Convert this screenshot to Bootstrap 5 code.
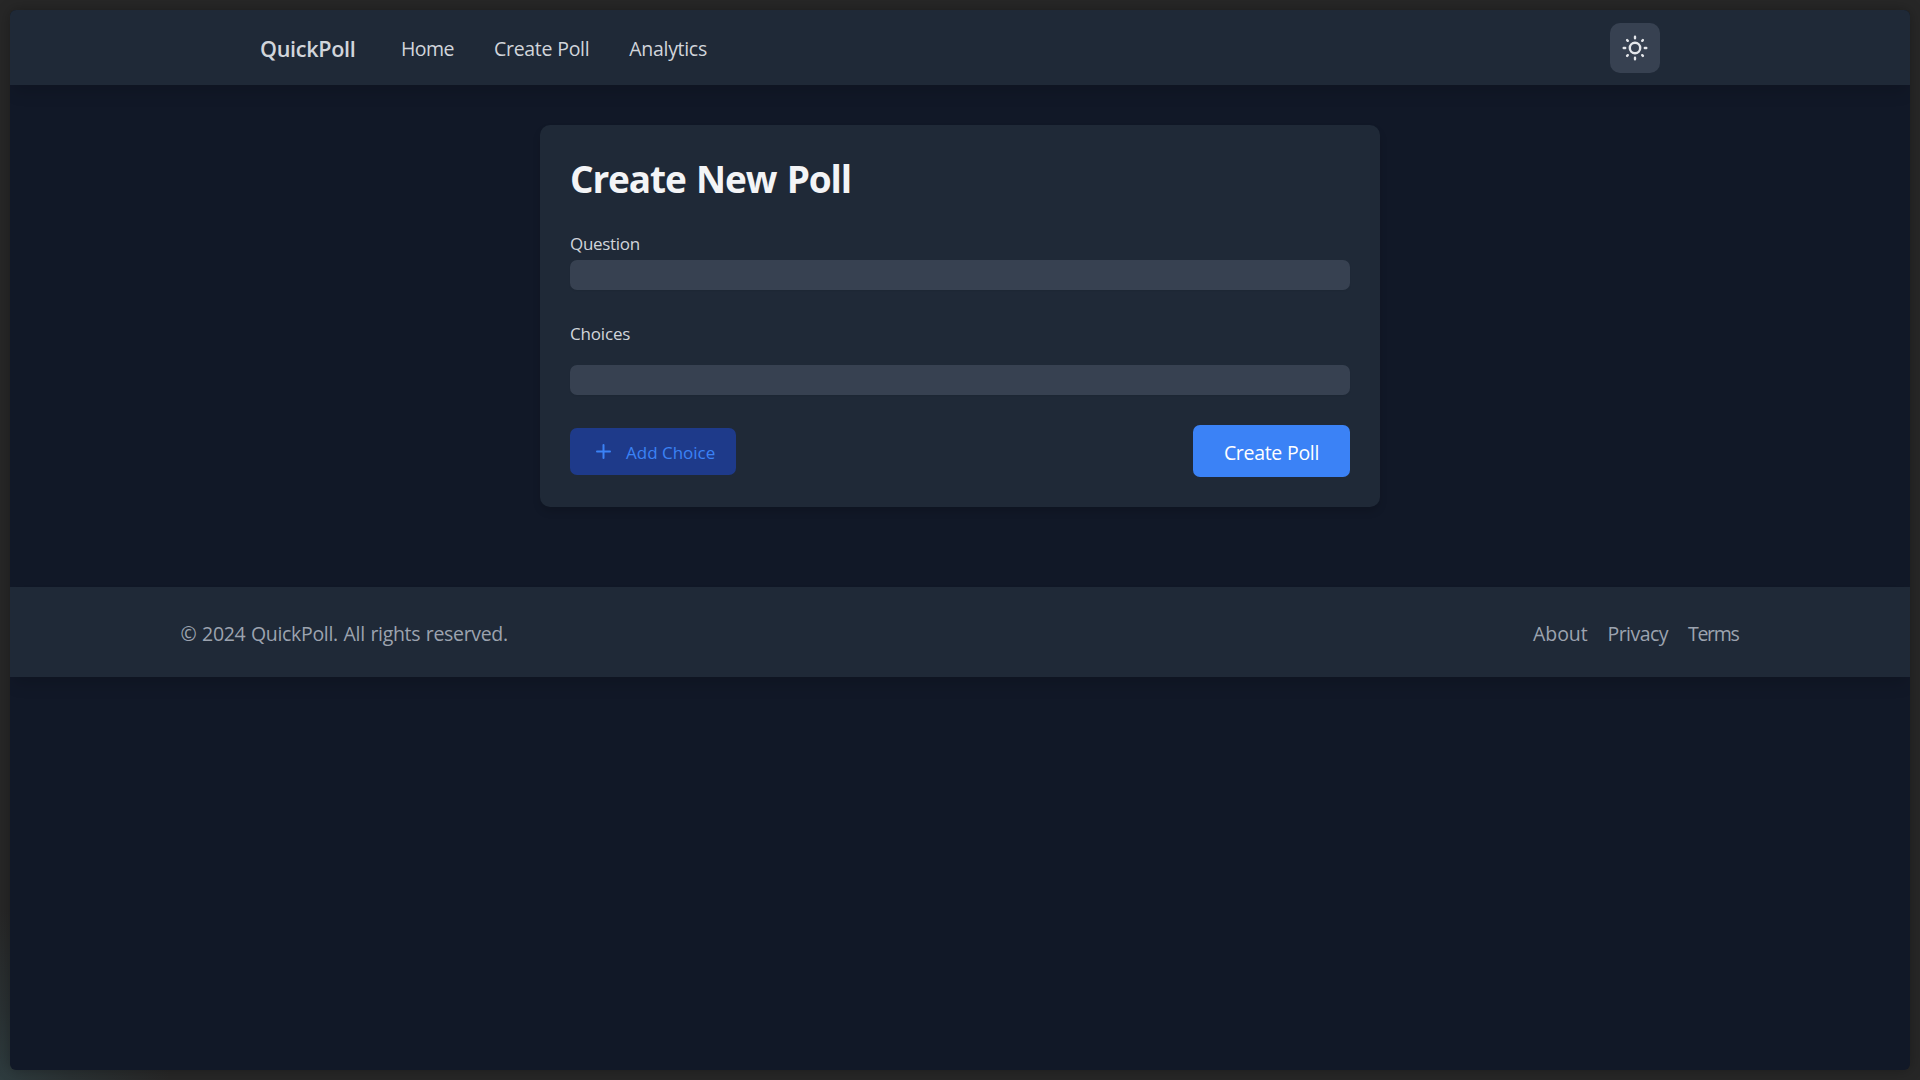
<!DOCTYPE html>
<html lang="en">
<head>
<meta charset="utf-8">
<meta name="viewport" content="width=device-width, initial-scale=1">
<title>QuickPoll</title>
<link rel="stylesheet" href="https://cdn.jsdelivr.net/npm/bootstrap@5.3.0/dist/css/bootstrap.min.css">
<style>
  body {
    font-family: "Segoe UI", "Open Sans", "Noto Sans", sans-serif;
    font-size: 19.5px; line-height: 30px; letter-spacing: -.25px;
    background: radial-gradient(circle at 0 1080px, #2e3c3f 0, #2a3133 70px, #272727 170px) #272727;
    color: #d1d5db;
  }
  .window { margin: 10px; background: #111827; border-radius: 6px; box-shadow: 0 0 14px rgba(0,0,0,.28); }
  .topbar, .panel, .bottombar { background: #1f2937; }
  .topbar, .bottombar { box-shadow: 0 10px 15px -3px rgba(0,0,0,.14); }
  .topbar { height: 75px; padding: 13px 0 12px; }
  .bar-inner { width: 1400px; }
  .navbar-brand { font-size: 21.6px; font-weight: 600; letter-spacing: -.32px; margin-right: 45.5px; padding: 1px 0 0; color: #d1d5db; line-height: 30px; }
  .menu { gap: 40px; padding-top: 1px; }
  .menu .nav-link { color: #d1d5db; padding: 0; }
  .l-home { letter-spacing: -.5px; }
  .l-create { letter-spacing: -.32px; word-spacing: .4px; }
  .l-stats { letter-spacing: -.3px; }
  .theme-btn { width: 50px; height: 50px; border-radius: 10px; background: #374151; color: #e5e7eb; padding: 0; }
  main { padding: 40px 0 80px; }
  .panel { width: 840px; padding: 30px; border-radius: 10px; box-shadow: 0 5px 8px -1px rgba(0,0,0,.16); }
  .panel h1 { font-size: 37px; font-weight: 700; line-height: 48px; letter-spacing: -1.15px; word-spacing: 2px; color: #f3f4f6; margin: 0 0 28px; }
  .form-label { display: block; font-size: 17px; line-height: 25px; margin: 0; }
  .l-question { letter-spacing: -.3px; margin-bottom: 4px; }
  .l-choices { letter-spacing: -.18px; margin: 31px 0 19px; }
  .field.form-control { height: 30px; min-height: 0; padding: 0 10px; border: 0; border-radius: 7px; background: #374151; box-shadow: 0 1px 2px rgba(0,0,0,.06); }
  .actions { margin-top: 30px; }
  .btn-add { width: 166px; height: 47px; padding: 0 0 0 24px; border: 0; border-radius: 7px; background: #1e3a8a; color: #3b82f6; font-size: 17px; letter-spacing: 0; gap: 13px; }
  .btn-add span { padding-top: 4px; }
  .btn-create { width: 157px; height: 52px; padding: 3px 0 0; border: 0; border-radius: 7px; background: #3b82f6; color: #fff; font-size: 19.5px; letter-spacing: -.32px; word-spacing: .4px; }
  .bottombar { height: 90px; padding-top: 3px; color: #9ca3af; }
  .foot-inner { width: 1560px; }
  .foot-inner a { color: inherit; }
  .copy { letter-spacing: -.32px; word-spacing: .9px; padding-left: .5px; }
  .l-privacy { letter-spacing: -.55px; }
  .l-about { letter-spacing: -.1px; }
  .l-terms { letter-spacing: -1.3px; }
  .foot-links { gap: 20px; padding-right: 1.5px; }
</style>
<script src="https://cdn.jsdelivr.net/npm/bootstrap@5.3.0/dist/js/bootstrap.bundle.min.js"></script>
</head>
<body class="vh-100 overflow-hidden d-flex p-0">
<div class="window flex-grow-1 overflow-hidden">
  <nav class="topbar navbar-expand">
    <div class="bar-inner mx-auto d-flex align-items-center">
      <a class="navbar-brand" href="#">QuickPoll</a>
      <div class="menu navbar-nav">
        <a class="nav-link l-home" href="#">Home</a>
        <a class="nav-link l-create" href="#">Create Poll</a>
        <a class="nav-link l-stats" href="#">Analytics</a>
      </div>
      <button class="btn theme-btn ms-auto d-flex align-items-center justify-content-center" type="button" aria-label="Toggle theme">
        <svg width="26" height="26" viewBox="0 0 26 26" fill="none" stroke="currentColor" stroke-width="2.4" stroke-linecap="round">
          <circle cx="13" cy="13" r="5.2"/>
          <path d="M13 1.7v1.5M13 22.8v1.5M1.7 13h1.5M22.8 13h1.5M5.1 5.1l.7.7M20.2 20.2l.7.7M5.1 20.9l.7-.7M20.2 5.8l.7-.7"/>
        </svg>
      </button>
    </div>
  </nav>
  <main>
    <form class="panel mx-auto">
      <h1>Create New Poll</h1>
      <label class="form-label l-question" for="q">Question</label>
      <input class="form-control field" id="q" type="text">
      <label class="form-label l-choices" for="c">Choices</label>
      <input class="form-control field" id="c" type="text">
      <div class="actions d-flex align-items-center justify-content-between">
        <button class="btn btn-add d-flex align-items-center" type="button">
          <svg width="19" height="19" viewBox="0 0 19 19" fill="none" stroke="currentColor" stroke-width="2" stroke-linecap="round"><path d="M9.5 3v13M3 9.5h13"/></svg>
          <span>Add Choice</span>
        </button>
        <button class="btn btn-create" type="button">Create Poll</button>
      </div>
    </form>
  </main>
  <footer class="bottombar d-flex align-items-center">
    <div class="foot-inner mx-auto d-flex justify-content-between">
      <span class="copy">© 2024 QuickPoll. All rights reserved.</span>
      <div class="foot-links d-flex">
        <a class="text-decoration-none l-about" href="#">About</a>
        <a class="text-decoration-none l-privacy" href="#">Privacy</a>
        <a class="text-decoration-none l-terms" href="#">Terms</a>
      </div>
    </div>
  </footer>
</div>
</body>
</html>
